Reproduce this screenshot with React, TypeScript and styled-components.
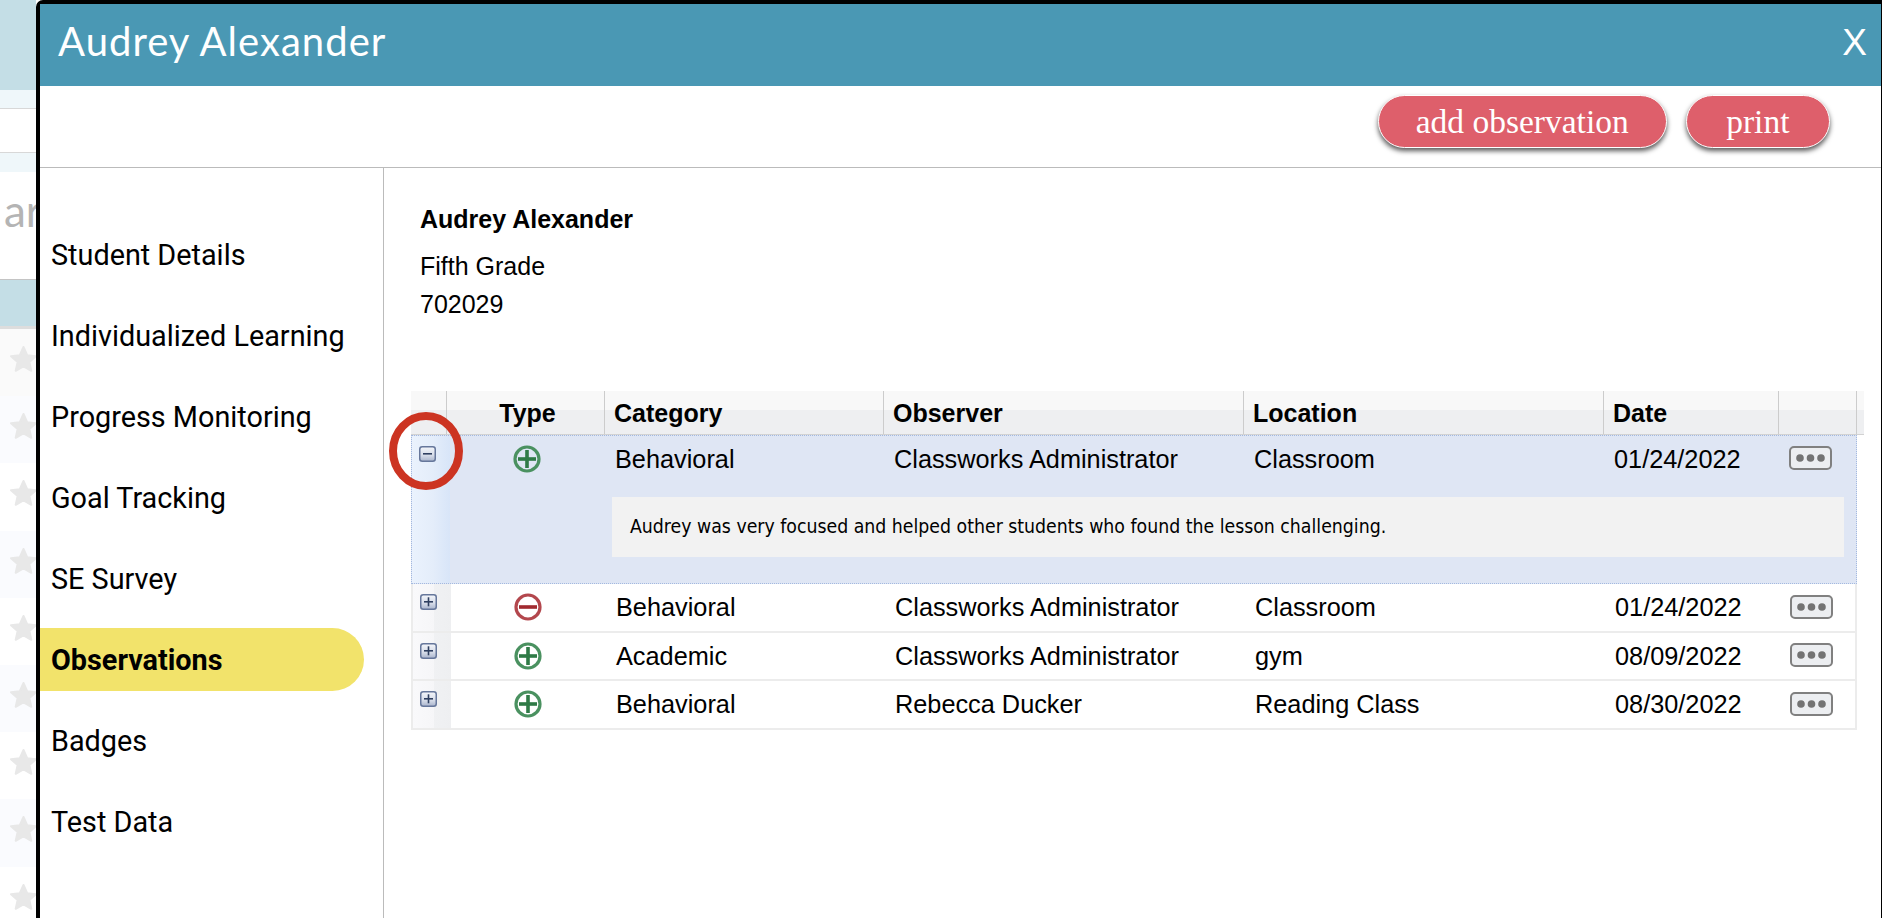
import styled, { createGlobalStyle } from "styled-components";

const GlobalStyle = createGlobalStyle`
  html, body {
    margin: 0;
    padding: 0;
    background: #fff;
  }
`;

const Page = styled.div`
  width: 1882px;
  height: 918px;
  display: flex;
  overflow: hidden;
`;

/* the page behind the modal, only a strip of it shows */
const BackStrip = styled.div`
  width: 36px;
  flex-shrink: 0;
  overflow: hidden;
  display: flex;
  flex-direction: column;
`;

const BackBand = styled.div<{ $h: number; $bg: string; $line?: string }>`
  height: ${(p) => p.$h}px;
  flex-shrink: 0;
  box-sizing: border-box;
  background: ${(p) => p.$bg};
  border-bottom: ${(p) => (p.$line ? `1px solid ${p.$line}` : "none")};
`;

const BackLabel = styled.div`
  height: 108px;
  flex-shrink: 0;
  box-sizing: border-box;
  border-bottom: 1px solid #c4c4c4;
  padding: 12px 0 0 4px;
  font-family: "Lato", sans-serif;
  font-size: 44px;
  line-height: 52px;
  color: #b4b4b4;
  white-space: nowrap;
`;

const StarRow = styled.div<{ $bg: string }>`
  height: 67.2px;
  flex-shrink: 0;
  box-sizing: border-box;
  display: flex;
  align-items: flex-start;
  padding: 16px 0 0 9px;
  background: ${(p) => p.$bg};
`;

const StarIcon = () => (
  <svg width="29" height="28" viewBox="0 0 29 28" style={{ flexShrink: 0 }}>
    <polygon
      points="14.5,2 18.2,10.2 27,11.2 20.4,17.1 22.3,25.8 14.5,21.4 6.7,25.8 8.6,17.1 2,11.2 10.8,10.2"
      fill="#e8e8e8"
      stroke="#e8e8e8"
      strokeWidth="2"
      strokeLinejoin="round"
    />
  </svg>
);

const Modal = styled.div`
  flex: 1;
  min-width: 0;
  height: 940px;
  box-sizing: border-box;
  background: #fff;
  border: 4px solid #000;
  border-right-width: 1px;
  border-radius: 7px 0 0 0;
  display: flex;
  flex-direction: column;
`;

const TitleBar = styled.div`
  height: 82px;
  flex-shrink: 0;
  box-sizing: border-box;
  background: #4a98b4;
  color: #fff;
  display: flex;
  align-items: center;
  justify-content: space-between;
  padding: 0 14px 8px 18px;
`;

const Title = styled.div`
  font-family: "Lato", sans-serif;
  font-size: 40px;
  letter-spacing: 1.05px;
`;

const CloseMark = styled.div`
  font-family: "Liberation Sans", sans-serif;
  font-size: 37px;
  margin-top: 4px;
`;

const Toolbar = styled.div`
  height: 82px;
  flex-shrink: 0;
  box-sizing: border-box;
  border-bottom: 1px solid #bbb;
  display: flex;
  justify-content: flex-end;
  gap: 19px;
  padding: 9px 51px 0 0;
`;

const PillButton = styled.button<{ $pad: number }>`
  height: 53px;
  box-sizing: border-box;
  border: 1.5px solid #fff;
  border-radius: 27px;
  background: #de5f6b;
  color: #fff;
  font-family: "Liberation Serif", serif;
  font-size: 33.5px;
  padding: 0 ${(p) => p.$pad}px;
  box-shadow: 0 3px 5px rgba(0, 0, 0, 0.65);
`;

const Body = styled.div`
  flex: 1;
  display: flex;
  min-height: 0;
`;

const SideNav = styled.nav`
  width: 344px;
  flex-shrink: 0;
  box-sizing: border-box;
  border-right: 1px solid #bbb;
  padding: 55px 19px 0 0;
  display: flex;
  flex-direction: column;
  gap: 18px;
`;

const NavItem = styled.div<{ $active?: boolean }>`
  height: 63px;
  display: flex;
  align-items: center;
  padding-left: 11px;
  font-family: "Roboto", sans-serif;
  font-size: 28.8px;
  font-weight: ${(p) => (p.$active ? 700 : 400)};
  color: #000;
  background: ${(p) => (p.$active ? "#f2e36b" : "transparent")};
  border-radius: 0 32px 32px 0;
`;

const Main = styled.div`
  flex: 1;
  min-width: 0;
  padding: 32px 0 0 27px;
  font-family: "Liberation Sans", sans-serif;
  color: #000;
`;

const StudentInfo = styled.div`
  padding-left: 9px;
  height: 191px;
  font-size: 25px;
  line-height: 38px;
`;

const StudentName = styled.div`
  font-weight: 700;
  margin-bottom: 9px;
`;

const GridWrap = styled.div`
  position: relative;
  width: 1453px;
`;

const HeaderRow = styled.div`
  display: grid;
  grid-template-columns: 36px 158px 279px 360px 360px 175px 78px 7px;
  height: 44px;
  box-sizing: border-box;
  border-bottom: 1px solid #d2d2d2;
  background: linear-gradient(#f8f8f8 0, #f8f8f8 45%, #eeeff1 45%, #eeeff1 100%);
`;

const HeaderCell = styled.div<{ $center?: boolean; $plain?: boolean }>`
  box-sizing: border-box;
  border-right: ${(p) => (p.$plain ? "none" : "1px solid #ccc")};
  display: flex;
  align-items: center;
  justify-content: ${(p) => (p.$center ? "center" : "flex-start")};
  padding-left: ${(p) => (p.$center ? 4 : 9)}px;
  padding-top: 1px;
  font-size: 25px;
  font-weight: 700;
`;

const Rows = styled.div`
  width: 1446px;
`;

const DataRow = styled.div<{ $height: number; $open?: boolean }>`
  display: grid;
  grid-template-columns: 38px 155px 279px 360px 360px 175px 79px;
  grid-template-rows: ${(p) => (p.$open ? "46px 1fr" : "1fr")};
  height: ${(p) => p.$height}px;
  box-sizing: border-box;
  font-size: 25.3px;
  background: ${(p) => (p.$open ? "#dfe6f4" : "#fff")};
  border: ${(p) => (p.$open ? "1px dotted #a3b9e0" : "none")};
  border-bottom: ${(p) => (p.$open ? "1px dotted #a3b9e0" : "2px solid #ececec")};
  border-left: ${(p) => (p.$open ? "1px dotted #a3b9e0" : "2px solid #ececec")};
  border-right: ${(p) => (p.$open ? "1px dotted #a3b9e0" : "2px solid #ececec")};
`;

const ExpandCell = styled.div<{ $open?: boolean }>`
  grid-row: 1 / -1;
  background: ${(p) =>
    p.$open
      ? "linear-gradient(90deg, #eaf2fd 0, #e4edfa 55%, #d8e5f8 100%)"
      : "linear-gradient(90deg, #f9f9fb 0, #f6f6f8 55%, #f0f1f3 55%, #eeeff1 100%)"};
  padding: 10px 0 0 7px;
  box-sizing: border-box;
`;

const TextCell = styled.div`
  display: flex;
  align-items: center;
  padding-left: 10px;
`;

const TypeCell = styled.div`
  display: flex;
  align-items: center;
  justify-content: center;
  padding: 0 2px 1px 0;
`;

const ActionCell = styled.div`
  display: flex;
  align-items: center;
  padding: 0 0 2px 10px;
`;

const DetailPanel = styled.div`
  grid-column: 3 / -1;
  grid-row: 2;
  margin: 15px 14px 26px 7px;
  background: #f2f2f2;
  display: flex;
  align-items: center;
  padding: 0 0 2px 18px;
  font-family: "DejaVu Sans Condensed", "Noto Sans", sans-serif;
  font-size: 19.3px;
`;

const Annotation = styled.svg`
  position: absolute;
  left: -23px;
  top: 20px;
  pointer-events: none;
`;

const ExpandIcon = ({ open }: { open?: boolean }) => (
  <svg width="17" height="16" viewBox="0 0 17 16" style={{ display: "block" }}>
    <defs>
      <linearGradient id="expandFill" x1="0" y1="0" x2="0" y2="1">
        <stop offset="0" stopColor="#f4f6fa" />
        <stop offset="0.6" stopColor="#d5dbe8" />
        <stop offset="1" stopColor="#a9b4cc" />
      </linearGradient>
    </defs>
    <rect x="0.75" y="0.75" width="15.5" height="14.5" rx="2.5" fill="url(#expandFill)" stroke="#66779b" strokeWidth="1.5" />
    <rect x="4" y="7" width="9" height="1.6" fill="#2f3f60" />
    {!open && <rect x="7.7" y="3.3" width="1.6" height="9" fill="#2f3f60" />}
  </svg>
);

const TypeIcon = ({ kind }: { kind: "plus" | "minus" }) => {
  const ring = kind === "plus" ? "#4a9160" : "#b3474d";
  const mark = kind === "plus" ? "#2f7a46" : "#a12a30";
  return (
    <svg width="28" height="28" viewBox="0 0 28 28" style={{ display: "block" }}>
      <circle cx="14" cy="14" r="12" fill="none" stroke={ring} strokeWidth="3.2" />
      <rect x="5" y="12.2" width="18" height="3.6" fill={mark} />
      {kind === "plus" && <rect x="12.2" y="5" width="3.6" height="18" fill={mark} />}
    </svg>
  );
};

const MoreIcon = () => (
  <svg width="43" height="24" viewBox="0 0 43 24" style={{ display: "block" }}>
    <rect x="1" y="1" width="41" height="22" rx="4" fill="#eceef1" stroke="#808080" strokeWidth="2" />
    <circle cx="11" cy="12" r="3.8" fill="#737373" />
    <circle cx="21.5" cy="12" r="3.8" fill="#737373" />
    <circle cx="32" cy="12" r="3.8" fill="#737373" />
  </svg>
);

const navItems = [
  "Student Details",
  "Individualized Learning",
  "Progress Monitoring",
  "Goal Tracking",
  "SE Survey",
  "Observations",
  "Badges",
  "Test Data",
];

const observations = [
  { open: true, height: 149, kind: "plus" as const, category: "Behavioral", observer: "Classworks Administrator", location: "Classroom", date: "01/24/2022" },
  { open: false, height: 49, kind: "minus" as const, category: "Behavioral", observer: "Classworks Administrator", location: "Classroom", date: "01/24/2022" },
  { open: false, height: 48, kind: "plus" as const, category: "Academic", observer: "Classworks Administrator", location: "gym", date: "08/09/2022" },
  { open: false, height: 49, kind: "plus" as const, category: "Behavioral", observer: "Rebecca Ducker", location: "Reading Class", date: "08/30/2022" },
];

const starBackgrounds = ["#fafafa", "#fafbfe", "#ffffff", "#fafbfe", "#ffffff", "#fafbfe", "#ffffff", "#fafbfe", "#ffffff"];

export default function App() {
  return (
    <Page>
      <GlobalStyle />
      <BackStrip>
        <BackBand $h={90} $bg="#c4dee6" />
        <BackBand $h={19} $bg="#eff7fa" $line="#d8d8d8" />
        <BackBand $h={44} $bg="#ffffff" $line="#d8d8d8" />
        <BackBand $h={19} $bg="#eff7fa" />
        <BackLabel>ar</BackLabel>
        <BackBand $h={46} $bg="#c4dee6" />
        <BackBand $h={3} $bg="#dddddd" />
        {starBackgrounds.map((bg, i) => (
          <StarRow key={i} $bg={bg}>
            <StarIcon />
          </StarRow>
        ))}
      </BackStrip>
      <Modal>
        <TitleBar>
          <Title>Audrey Alexander</Title>
          <CloseMark>X</CloseMark>
        </TitleBar>
        <Toolbar>
          <PillButton $pad={37}>add observation</PillButton>
          <PillButton $pad={39.5}>print</PillButton>
        </Toolbar>
        <Body>
          <SideNav>
            {navItems.map((item) => (
              <NavItem key={item} $active={item === "Observations"}>
                {item}
              </NavItem>
            ))}
          </SideNav>
          <Main>
            <StudentInfo>
              <StudentName>Audrey Alexander</StudentName>
              <div>Fifth Grade</div>
              <div>702029</div>
            </StudentInfo>
            <GridWrap>
              <HeaderRow>
                <HeaderCell />
                <HeaderCell $center>Type</HeaderCell>
                <HeaderCell>Category</HeaderCell>
                <HeaderCell>Observer</HeaderCell>
                <HeaderCell>Location</HeaderCell>
                <HeaderCell>Date</HeaderCell>
                <HeaderCell />
                <HeaderCell $plain />
              </HeaderRow>
              <Rows>
                {observations.map((row, i) => (
                  <DataRow key={i} $height={row.height} $open={row.open}>
                    <ExpandCell $open={row.open}>
                      <ExpandIcon open={row.open} />
                    </ExpandCell>
                    <TypeCell>
                      <TypeIcon kind={row.kind} />
                    </TypeCell>
                    <TextCell>{row.category}</TextCell>
                    <TextCell>{row.observer}</TextCell>
                    <TextCell>{row.location}</TextCell>
                    <TextCell>{row.date}</TextCell>
                    <ActionCell>
                      <MoreIcon />
                    </ActionCell>
                    {row.open && (
                      <DetailPanel>
                        Audrey was very focused and helped other students who found the lesson challenging.
                      </DetailPanel>
                    )}
                  </DataRow>
                ))}
              </Rows>
              <Annotation width="76" height="80" viewBox="0 0 76 80">
                <ellipse cx="38" cy="40" rx="33" ry="35" fill="none" stroke="#cc3422" strokeWidth="8" />
              </Annotation>
            </GridWrap>
          </Main>
        </Body>
      </Modal>
    </Page>
  );
}
